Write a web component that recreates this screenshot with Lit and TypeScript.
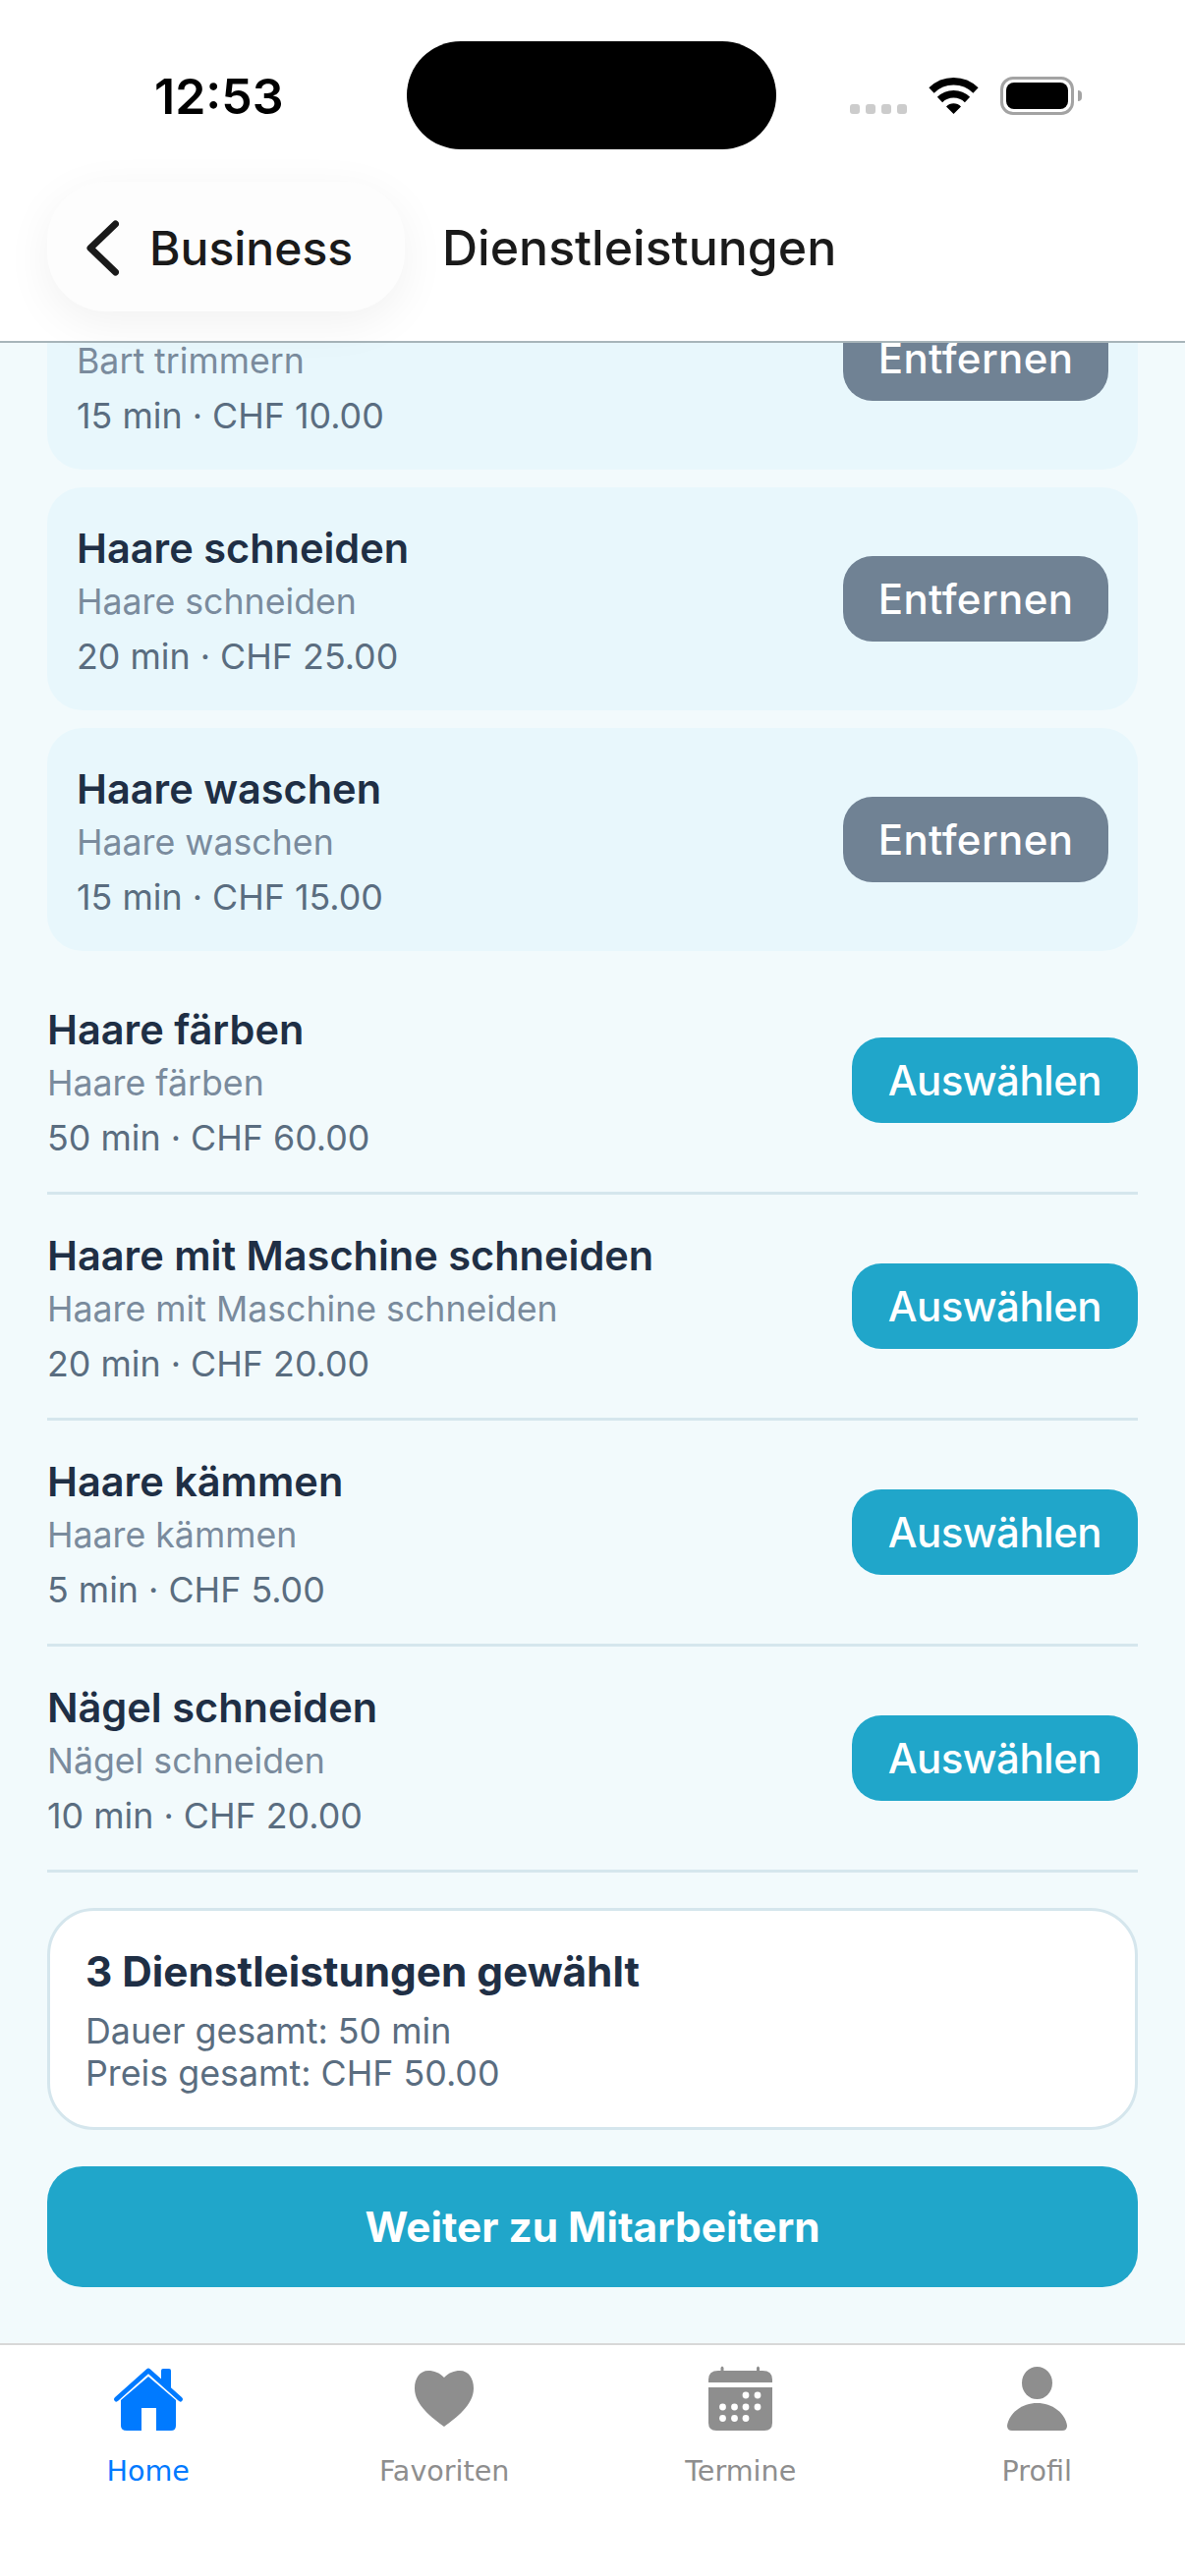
import { LitElement, html, css, svg } from "lit";
import { customElement } from "lit/decorators.js";

const selected = [
  { name: "Bart trimmen", sub: "Bart trimmern", meta: "15 min · CHF 10.00" },
  { name: "Haare schneiden", sub: "Haare schneiden", meta: "20 min · CHF 25.00" },
  { name: "Haare waschen", sub: "Haare waschen", meta: "15 min · CHF 15.00" },
];

const others = [
  { name: "Haare färben", sub: "Haare färben", meta: "50 min · CHF 60.00" },
  { name: "Haare mit Maschine schneiden", sub: "Haare mit Maschine schneiden", meta: "20 min · CHF 20.00" },
  { name: "Haare kämmen", sub: "Haare kämmen", meta: "5 min · CHF 5.00" },
  { name: "Nägel schneiden", sub: "Nägel schneiden", meta: "10 min · CHF 20.00" },
];

const calendarDots = [
  [55, 37], [67, 37],
  [31.5, 49], [43.5, 49], [55, 49], [67, 49],
  [31.5, 60.5], [43.5, 60.5], [55, 60.5],
];

const icons = {
  home: svg`
    <path d="M50 18 L78 42 V68 Q78 73 73 73 H58 V50 H43 V73 H28 Q22 73 22 68 V42 Z" fill="currentColor" />
    <path d="M17.5 41 L50 12 L82.5 41" fill="none" stroke="currentColor" stroke-width="5" stroke-linecap="round" stroke-linejoin="round" />
    <path d="M63 22 V12 Q63 10 65 10 H71 Q73 10 73 12 V31 Z" fill="currentColor" />`,
  heart: svg`
    <path d="M50 19 C45 14 40 12 34 12 C25 12 20 20 20 30 C20 47 38 60 50 69 C62 60 80 47 80 30 C80 20 75 12 66 12 C60 12 55 14 50 19 Z" fill="currentColor" />`,
  calendar: svg`
    <path d="M17 24 V21 Q17 12 27 12 H29.5 V9 Q31 6 32.5 9 V12 H66 V9 Q67.5 6 69 9 V12 H72 Q82 12 82 21 V24 Z" fill="currentColor" />
    <path d="M17 29 H82 V65 Q82 73 74 73 H25 Q17 73 17 65 Z" fill="currentColor" />
    ${calendarDots.map(([x, y]) => svg`<circle cx=${x} cy=${y} r="3.4" fill="#fff" />`)}`,
  person: svg`
    <ellipse cx="50.5" cy="24.5" rx="15.5" ry="16.5" fill="currentColor" />
    <path d="M20 68 C22 55 35 45 50.5 45 C66 45 79 55 81 68 Q81 73 76 73 H25 Q20 73 20 68 Z" fill="currentColor" />`,
};

const tabs = [
  { label: "Home", icon: icons.home, active: true },
  { label: "Favoriten", icon: icons.heart, active: false },
  { label: "Termine", icon: icons.calendar, active: false },
  { label: "Profil", icon: icons.person, active: false },
];

@customElement("app-root")
export class AppRoot extends LitElement {
  static styles = css`
    :host {
      display: block;
      width: 1206px;
      height: 2622px;
      font-family: Inter, "Liberation Sans", sans-serif;
      background: #fff;
    }

    .page {
      display: flex;
      flex-direction: column;
      height: 2622px;
      overflow: hidden;
    }

    /* status bar */
    .status {
      display: flex;
      align-items: flex-start;
      height: 186px;
      flex: none;
      background: #fff;
      padding-left: 157px;
      box-sizing: border-box;
    }
    .time {
      width: 257px;
      margin-top: 69px;
      font-size: 50px;
      line-height: 58px;
      font-weight: 600;
      color: #000;
    }
    .island {
      width: 376px;
      height: 110px;
      margin-top: 42px;
      border-radius: 55px;
      background: #000;
    }
    .signal {
      display: flex;
      gap: 6px;
      margin: 106px 22px 0 75px;
    }
    .signal i {
      width: 10px;
      height: 10px;
      border-radius: 3px;
      background: #ccc;
    }
    .wifi {
      width: 51px;
      height: 37px;
      margin: 79px 22px 0 0;
    }
    .battery {
      width: 75px;
      height: 39px;
      margin-top: 78px;
      box-sizing: border-box;
      border: 3px solid #a3a3a3;
      border-radius: 13px;
      padding: 3px;
      position: relative;
    }
    .battery b {
      display: block;
      height: 100%;
      border-radius: 8px;
      background: #000;
    }
    .battery::after {
      content: "";
      position: absolute;
      right: -11px;
      top: 11px;
      width: 4px;
      height: 11px;
      border-radius: 0 4px 4px 0;
      background: #a3a3a3;
    }

    /* header */
    .top {
      position: relative;
      z-index: 2;
      flex: none;
    }
    .header {
      display: flex;
      align-items: center;
      gap: 38px;
      height: 163px;
      box-sizing: border-box;
      padding: 0 0 31px 48px;
      background: #fff;
      border-bottom: 2px solid #a8b5ba;
    }
    .back {
      display: flex;
      align-items: center;
      gap: 31px;
      width: 364px;
      height: 132px;
      box-sizing: border-box;
      padding: 2px 0 0 40px;
      border-radius: 60px;
      background: #fdfdfd;
      box-shadow: 0 12px 48px rgba(0, 0, 0, 0.06);
      font-size: 48px;
      font-weight: 500;
      color: #1a1a1a;
    }
    .back svg {
      width: 33px;
      height: 57px;
    }
    .title {
      padding-top: 2px;
      font-size: 50px;
      font-weight: 500;
      color: #1a1a1a;
    }

    /* scrolled list */
    .content {
      flex: 1;
      min-height: 0;
      overflow: hidden;
      background: #f2fafc;
    }
    .scroll {
      display: flex;
      flex-direction: column;
      padding: 0 48px;
      margin-top: -98px;
    }
    .card {
      display: flex;
      align-items: center;
      justify-content: space-between;
      height: 227px;
      box-sizing: border-box;
      padding: 0 30px;
      margin-bottom: 18px;
      border-radius: 36px;
      background: #e8f7fc;
    }
    .row {
      display: flex;
      align-items: center;
      justify-content: space-between;
      height: 230px;
      box-sizing: border-box;
      border-bottom: 3px solid #d5e6ed;
    }
    .info {
      padding-top: 8px;
    }
    .name {
      font-size: 41.5px;
      line-height: 62px;
      font-weight: 600;
      color: #1f2f45;
    }
    .sub {
      font-size: 35.7px;
      line-height: 46px;
      color: #7a8b9d;
    }
    .meta {
      font-size: 35.8px;
      line-height: 66px;
      color: #5a6d80;
    }
    .btn {
      display: flex;
      align-items: center;
      justify-content: center;
      height: 87px;
      padding: 0 37px;
      border-radius: 30px;
      font-size: 42px;
      font-weight: 500;
      color: #fff;
    }
    .btn.remove {
      padding: 0 35.5px;
      background: #708294;
      letter-spacing: 0.4px;
    }
    .btn.pick {
      background: #20a6ca;
      letter-spacing: -0.55px;
    }

    /* summary */
    .summary {
      height: 226px;
      box-sizing: border-box;
      margin-top: 36px;
      padding: 32px 36px 0;
      border: 3px solid #d5e6ed;
      border-radius: 48px;
      background: #fff;
    }
    .summary h3 {
      margin: 0 0 9px;
      font-size: 42.3px;
      line-height: 60px;
      font-weight: 700;
      color: #1f2f45;
    }
    .summary p {
      margin: 0;
      font-size: 35.8px;
      line-height: 43px;
      color: #5a6d80;
    }
    .next {
      display: flex;
      align-items: center;
      justify-content: center;
      height: 123px;
      margin-top: 37px;
      border-radius: 36px;
      background: #20a6ca;
      font-size: 42.3px;
      font-weight: 700;
      color: #fff;
    }

    /* tab bar */
    .tabs {
      display: grid;
      grid-template-columns: repeat(4, 1fr);
      flex: none;
      height: 237px;
      box-sizing: border-box;
      padding-top: 14px;
      border-top: 2px solid #d8d8d8;
      background: #fff;
    }
    .tab {
      display: flex;
      flex-direction: column;
      align-items: center;
      color: #8e8e8e;
    }
    .tab.active {
      color: #007aff;
    }
    .tab svg {
      width: 100px;
      height: 80px;
    }
    .tab span {
      margin-top: 16px;
      font-family: "DejaVu Sans", sans-serif;
      font-size: 28.6px;
      line-height: 36px;
    }
  `;

  private renderService(s: { name: string; sub: string; meta: string }) {
    return html`
      <div class="info">
        <div class="name">${s.name}</div>
        <div class="sub">${s.sub}</div>
        <div class="meta">${s.meta}</div>
      </div>
    `;
  }

  render() {
    return html`
      <div class="page">
        <div class="top">
          <div class="status">
            <div class="time">12:53</div>
            <div class="island"></div>
            <div class="signal"><i></i><i></i><i></i><i></i></div>
            <svg class="wifi" viewBox="0 0 51 37">
              <path d="M3 13 A32 32 0 0 1 48 13" fill="none" stroke="#000" stroke-width="7.5" />
              <path d="M11.5 22.5 A20 20 0 0 1 39.5 22.5" fill="none" stroke="#000" stroke-width="7.5" />
              <path d="M18 29.5 A10.5 10.5 0 0 1 33 29.5 L25.5 37 Z" fill="#000" />
            </svg>
            <div class="battery"><b></b></div>
          </div>
          <div class="header">
            <div class="back">
              <svg viewBox="0 0 33 57">
                <path d="M29.5 4 L4 28.5 L29.5 53" fill="none" stroke="#1a1a1a" stroke-width="7" stroke-linecap="round" stroke-linejoin="round" />
              </svg>
              Business
            </div>
            <div class="title">Dienstleistungen</div>
          </div>
        </div>

        <div class="content">
          <div class="scroll">
            ${selected.map(
              (s) => html`
                <div class="card">
                  ${this.renderService(s)}
                  <div class="btn remove">Entfernen</div>
                </div>
              `
            )}
            ${others.map(
              (s) => html`
                <div class="row">
                  ${this.renderService(s)}
                  <div class="btn pick">Auswählen</div>
                </div>
              `
            )}
            <div class="summary">
              <h3>3 Dienstleistungen gewählt</h3>
              <p>Dauer gesamt: 50 min</p>
              <p>Preis gesamt: CHF 50.00</p>
            </div>
            <div class="next">Weiter zu Mitarbeitern</div>
          </div>
        </div>

        <div class="tabs">
          ${tabs.map(
            (t) => html`
              <div class="tab ${t.active ? "active" : ""}">
                <svg viewBox="0 0 100 80">${t.icon}</svg>
                <span>${t.label}</span>
              </div>
            `
          )}
        </div>
      </div>
    `;
  }
}
